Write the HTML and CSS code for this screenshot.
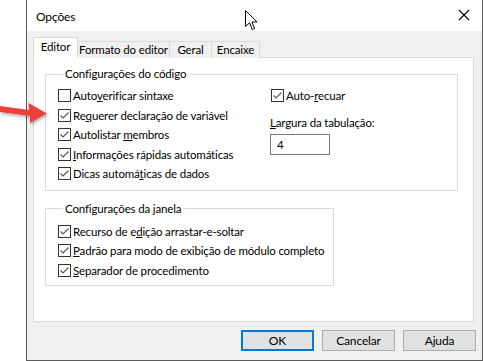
FILE: index.html
```html
<!DOCTYPE html>
<html lang="pt">
<head>
    <meta charset="UTF-8">
    <title>Opções</title>
    <link rel="stylesheet" href="styles.css">
</head>
<body>
    <div class="window">
        <div class="titlebar">
            <span class="title">Opções</span>
            <svg class="close" width="12" height="12" viewBox="0 0 12 12">
                <path d="M1 1 L11 11 M11 1 L1 11" stroke="#000" stroke-width="1.1" fill="none"/>
            </svg>
        </div>
        <div class="client">
            <div class="tabs">
                <div class="tab active">Editor</div>
                <div class="tab">Formato do editor</div>
                <div class="tab">Geral</div>
                <div class="tab">Encaixe</div>
            </div>
            <div class="panel">
                <fieldset class="group group-code">
                    <legend>Configurações do código</legend>
                    <div class="cols">
                        <div class="col-left">
                            <div class="check-row"><span class="box"></span><span>Auto<u>v</u>erificar sintaxe</span></div>
                            <div class="check-row"><span class="box checked"><svg viewBox="0 0 11 11"><path d="M1.5 5.5 L4 8 L9.5 2.5"/></svg></span><span>Re<u>q</u>uerer declaração de variável</span></div>
                            <div class="check-row"><span class="box checked"><svg viewBox="0 0 11 11"><path d="M1.5 5.5 L4 8 L9.5 2.5"/></svg></span><span>Autolistar <u>m</u>embros</span></div>
                            <div class="check-row"><span class="box checked"><svg viewBox="0 0 11 11"><path d="M1.5 5.5 L4 8 L9.5 2.5"/></svg></span><span><u>I</u>nformações rápidas automáticas</span></div>
                            <div class="check-row"><span class="box checked"><svg viewBox="0 0 11 11"><path d="M1.5 5.5 L4 8 L9.5 2.5"/></svg></span><span>Dicas automá<u>t</u>icas de dados</span></div>
                        </div>
                        <div class="col-right">
                            <div class="check-row"><span class="box checked"><svg viewBox="0 0 11 11"><path d="M1.5 5.5 L4 8 L9.5 2.5"/></svg></span><span>Auto-<u>r</u>ecuar</span></div>
                            <div class="field-label"><u>L</u>argura da tabulação:</div>
                            <div class="textbox">4</div>
                        </div>
                    </div>
                </fieldset>
                <fieldset class="group group-window">
                    <legend>Configurações da janela</legend>
                    <div class="check-row"><span class="box checked"><svg viewBox="0 0 11 11"><path d="M1.5 5.5 L4 8 L9.5 2.5"/></svg></span><span>Recurso de e<u>d</u>ição arrastar-e-soltar</span></div>
                    <div class="check-row"><span class="box checked"><svg viewBox="0 0 11 11"><path d="M1.5 5.5 L4 8 L9.5 2.5"/></svg></span><span><u>P</u>adrão para modo de exibição de módulo completo</span></div>
                    <div class="check-row"><span class="box checked"><svg viewBox="0 0 11 11"><path d="M1.5 5.5 L4 8 L9.5 2.5"/></svg></span><span><u>S</u>eparador de procedimento</span></div>
                </fieldset>
            </div>
            <div class="buttons">
                <button class="btn default">OK</button>
                <button class="btn">Cancelar</button>
                <button class="btn">Ajuda</button>
            </div>
        </div>
    </div>

    <!-- annotation arrow and mouse pointer drawn over the dialog -->
    <svg class="red-arrow" width="60" height="34" viewBox="0 0 60 34">
        <defs>
            <filter id="shade" x="-20%" y="-30%" width="140%" height="170%">
                <feDropShadow dx="1" dy="2" stdDeviation="1.5" flood-color="#000" flood-opacity="0.3"/>
            </filter>
        </defs>
        <path d="M0 6 L29 10 L28.5 3 L47 13.5 L30 23 L30 16 L0 12 Z" fill="#e8433b" filter="url(#shade)"/>
    </svg>
    <svg class="pointer" width="14" height="22" viewBox="0 0 14 22">
        <path d="M0.5 0.5 L0.5 16.5 L4.5 12.8 L7.3 19.5 L9.6 18.5 L6.9 12 L12 12 Z" fill="#fff" stroke="#000" stroke-width="1" stroke-linejoin="miter"/>
    </svg>
</body>
</html>
```

FILE: styles.css
```css
body {
    margin: 0;
    padding: 0;
    background-color: #fff;
    font-family: Lato, "Noto Sans", sans-serif;
    font-size: 11.5px;
    letter-spacing: -0.15px;
    color: #000;
    overflow: hidden;
}
.window {
    margin-left: 26px;
    width: 455px;
    height: 360px;
    border: 1px solid #5a5a5a;
    border-top: none;
    background-color: #f0f0f0;
    display: flex;
    flex-direction: column;
}
.titlebar {
    height: 31px;
    background-color: #fff;
    display: flex;
    align-items: center;
    justify-content: space-between;
    padding: 0 9px 0 9px;
    flex-shrink: 0;
}
.title {
    font-size: 12px;
    margin-top: 1px;
}
.close {
    margin-right: 3px;
    margin-top: -1px;
}
.client {
    padding: 7px 8px 0 6px;
    display: flex;
    flex-direction: column;
}
.tabs {
    display: flex;
    align-items: flex-end;
    height: 20px;
    margin-bottom: -1px;
    position: relative;
    z-index: 1;
}
.tab {
    height: 17px;
    line-height: 16px;
    padding: 0 5px 0 5px;
    border: 1px solid #d9d9d9;
    border-bottom: none;
    border-left: none;
    background-color: #f0f0f0;
    box-sizing: border-box;
    text-align: center;
}
.tab.active {
    height: 21px;
    line-height: 18px;
    width: 45px;
    padding: 0;
    border-left: 1px solid #d9d9d9;
    background-color: #fff;
}
.tab:nth-child(2) {
    width: 92px;
    padding: 0;
}
.tab:nth-child(3) {
    width: 42px;
    padding: 0;
}
.tab:nth-child(4) {
    width: 48px;
    padding: 0;
}
.panel {
    height: 265px;
    box-sizing: border-box;
    background-color: #fff;
    border: 1px solid #d9d9d9;
    padding: 8px 0 0 11px;
}
.group {
    margin: 0;
    padding: 0;
    border: 1px solid #dcdcdc;
    min-width: 0;
}
.group legend {
    margin-left: 5px;
    padding: 0 2px;
    line-height: 16px;
}
.group-code {
    width: 413px;
    box-sizing: border-box;
    padding: 4px 0 6px 12px;
}
.group-window {
    width: 289px;
    box-sizing: border-box;
    margin-top: 10px;
    padding: 5px 0 5px 12px;
}
.cols {
    display: grid;
    grid-template-columns: 212px 1fr;
}
.check-row {
    height: 19.5px;
    display: flex;
    align-items: center;
    white-space: nowrap;
}
.box {
    width: 13px;
    height: 13px;
    box-sizing: border-box;
    border: 1px solid #333;
    background-color: #fff;
    margin-right: 2px;
    flex-shrink: 0;
    display: flex;
    align-items: center;
    justify-content: center;
}
.box svg {
    width: 11px;
    height: 11px;
}
.box svg path {
    fill: none;
    stroke: #555;
    stroke-width: 1.1;
}
u {
    text-decoration-thickness: 1px;
    text-underline-offset: 1px;
}
.col-right .check-row {
    margin-left: 1px;
}
.field-label {
    margin-top: 8px;
    line-height: 17px;
}
.textbox {
    width: 60px;
    height: 21px;
    box-sizing: border-box;
    border: 1px solid #7a7a7a;
    margin-top: 3px;
    padding-left: 6px;
    line-height: 19px;
}
.buttons {
    display: flex;
    justify-content: flex-end;
    gap: 8px;
    margin-top: 8px;
    margin-right: -2px;
}
.btn {
    width: 73px;
    height: 21px;
    box-sizing: border-box;
    background-color: #e1e1e1;
    border: 1px solid #adadad;
    font-family: inherit;
    font-size: 12px;
    letter-spacing: -0.15px;
    color: #000;
    padding: 0;
}
.btn.default {
    border: 2px solid #0078d7;
}
.red-arrow {
    position: absolute;
    left: 0;
    top: 100px;
}
.pointer {
    position: absolute;
    left: 245px;
    top: 10px;
}
```
